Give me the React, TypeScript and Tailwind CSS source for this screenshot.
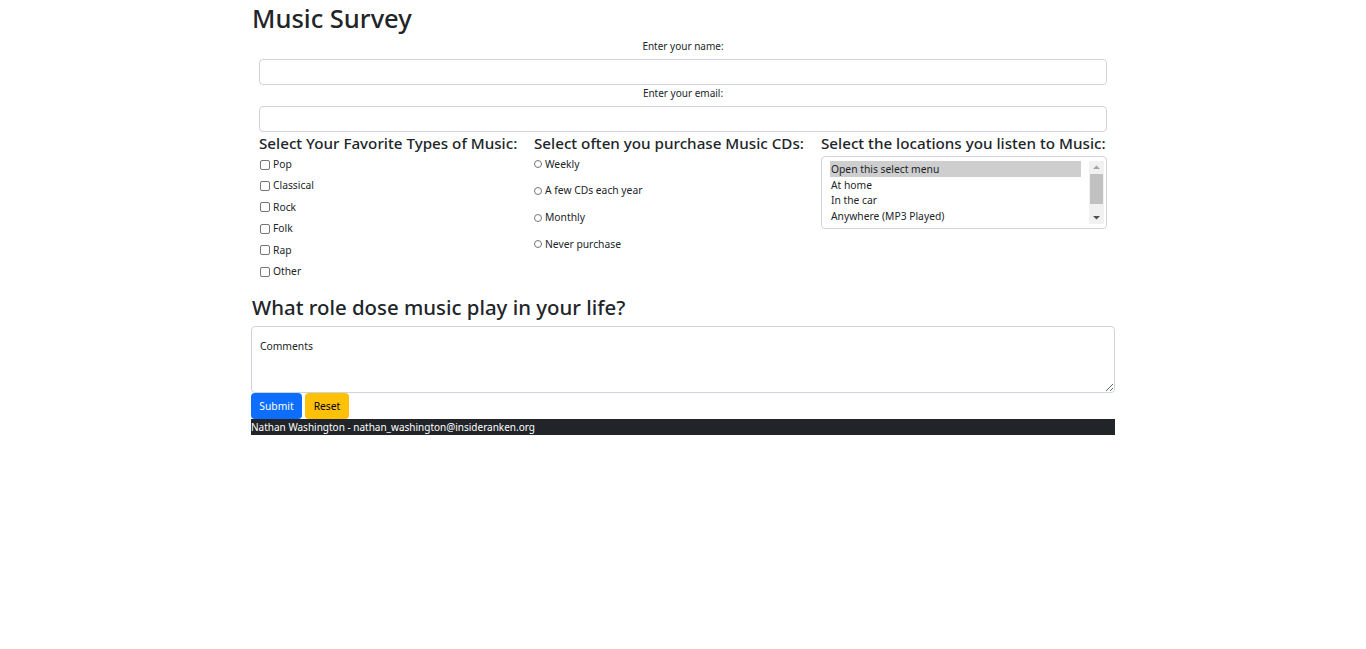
import type { ReactNode } from 'react'

const font = { fontFamily: '"Noto Sans", "Open Sans", sans-serif' }

const genres = ['Pop', 'Classical', 'Rock', 'Folk', 'Rap', 'Other']
const frequencies = ['Weekly', 'A few CDs each year', 'Monthly', 'Never purchase']
const locations = ['Open this select menu', 'At home', 'In the car', 'Anywhere (MP3 Played)']

function FieldLabel({ children }: { children: ReactNode }) {
  return (
    <label className="block h-[16px] text-center text-[10px] leading-[16px] text-[#212529]">
      {children}
    </label>
  )
}

function TextInput() {
  return (
    <input
      type="text"
      className="block h-[26px] w-full rounded-[4px] border border-[#ced4da] bg-white px-2 text-[11px] outline-none"
    />
  )
}

function ListBox() {
  return (
    <div className="mt-[2px] flex h-[73px] w-full rounded-[4px] border border-[#ced4da] bg-white py-[4px] pl-[8px] pr-[2px]">
      <ul className="flex-1 pr-[8px] text-[10.3px] text-[#212529]">
        {locations.map((l, i) => (
          <li
            key={l}
            className={
              'h-[15.7px] pl-[1px] leading-[16px] ' + (i === 0 ? 'bg-[#cecece]' : '')
            }
          >
            {l}
          </li>
        ))}
      </ul>
      {/* fake scrollbar */}
      <div className="flex w-[15px] flex-col items-center bg-[#f1f1f1]">
        <svg width="15" height="13" viewBox="0 0 15 13" className="shrink-0">
          <path d="M4 8 L7.5 4.5 L11 8 Z" fill="#a3a3a3" />
        </svg>
        <div className="h-[30px] w-[13px] bg-[#c1c1c1]" />
        <div className="flex-1" />
        <svg width="15" height="13" viewBox="0 0 15 13" className="shrink-0">
          <path d="M4 5 L7.5 8.5 L11 5 Z" fill="#505050" />
        </svg>
      </div>
    </div>
  )
}

export default function App() {
  return (
    <div className="min-h-screen bg-white text-[#212529]" style={font}>
      <div className="mx-auto w-[864px]">
        <h1 className="h-[38px] pl-[1px] text-[25.5px] font-medium leading-[36px]">Music Survey</h1>

        <form className="px-2" onSubmit={(e) => e.preventDefault()}>
          <FieldLabel>Enter your name:</FieldLabel>
          <div className="mt-[5px]">
            <TextInput />
          </div>
          <FieldLabel>Enter your email:</FieldLabel>
          <div className="mt-[5px]">
            <TextInput />
          </div>

          <div className="flex">
            <div className="w-[275px] shrink-0">
              <h5 className="h-[22px] whitespace-nowrap text-[15.2px] font-medium leading-[22px]">
                Select Your Favorite Types of Music:
              </h5>
              {genres.map((g) => (
                <label key={g} className="flex h-[21.4px] items-center gap-[3px] text-[10.3px]">
                  <input
                    type="checkbox"
                    className="ml-[1px] h-[10px] w-[10px] appearance-none rounded-[2px] border border-[#767676] bg-white"
                  />
                  {g}
                </label>
              ))}
            </div>

            <div className="w-[287px] shrink-0">
              <h5 className="h-[22px] whitespace-nowrap text-[15.2px] font-medium leading-[22px]">
                Select often you purchase Music CDs:
              </h5>
              <div className="-mt-[3px]">
                {frequencies.map((f) => (
                  <label key={f} className="flex h-[26.7px] items-center gap-[3px] text-[10.3px]">
                    <input
                      type="radio"
                      name="freq"
                      className="h-[8px] w-[8px] appearance-none rounded-full border border-[#767676] bg-white"
                    />
                    {f}
                  </label>
                ))}
              </div>
            </div>

            <div className="min-w-0 flex-1">
              <h5 className="h-[22px] whitespace-nowrap text-[15.2px] font-medium leading-[22px]">
                Select the locations you listen to Music:
              </h5>
              <ListBox />
            </div>
          </div>
        </form>

        <h4 className="mt-[10px] h-[30px] pl-[1px] text-[20.4px] font-medium leading-[30px]">
          What role dose music play in your life?
        </h4>
        <textarea
          defaultValue="Comments"
          className="mt-[4px] block h-[67px] w-full rounded-[4px] border border-[#ced4da] bg-white px-[8px] py-[12px] text-[10.3px] leading-[14px] text-[#212529] outline-none"
        />
        <div className="flex gap-[3px]">
          <button className="h-[26px] w-[51px] rounded-[4px] bg-[#0d6efd] text-[10.3px] text-white">
            Submit
          </button>
          <button className="h-[26px] w-[44px] rounded-[4px] bg-[#ffc107] text-[10.3px] text-black">
            Reset
          </button>
        </div>
        <footer className="h-[16px] bg-[#212529] text-[10px] leading-[16px] text-white">
          Nathan Washington - nathan_washington@insideranken.org
        </footer>
      </div>
    </div>
  )
}
